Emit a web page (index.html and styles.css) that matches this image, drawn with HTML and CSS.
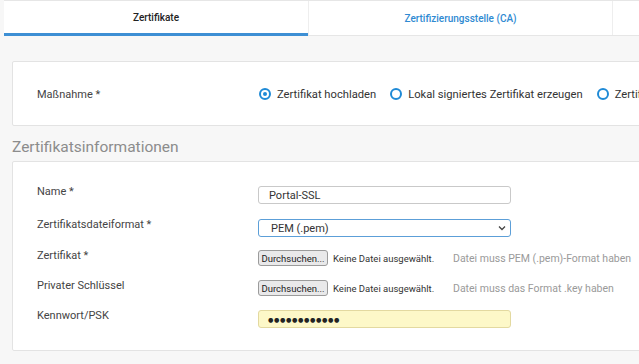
FILE: index.html
```html
<!DOCTYPE html>
<html lang="de">
<head>
<meta charset="utf-8">
<title>Zertifikate</title>
<link rel="stylesheet" href="styles.css">
</head>
<body>
<div class="page">
  <nav class="tabs">
    <div class="tab tab-active">Zertifikate</div>
    <div class="tab tab-link">Zertifizierungsstelle (CA)</div>
    <div class="tab tab-empty"></div>
  </nav>
  <main class="content">
    <section class="panel panel-action">
      <div class="row-label">Maßnahme *</div>
      <div class="radios">
        <label class="radio"><span class="radio-dot radio-checked"></span>Zertifikat hochladen</label>
        <label class="radio"><span class="radio-dot"></span>Lokal signiertes Zertifikat erzeugen</label>
        <label class="radio"><span class="radio-dot"></span>Zertifikatsignierungsanforderung (CSR) erzeugen</label>
      </div>
    </section>
    <h2 class="section-title">Zertifikatsinformationen</h2>
    <section class="panel panel-form">
      <div class="form-row">
        <div class="form-label">Name *</div>
        <div class="field field-text">Portal-SSL</div>
      </div>
      <div class="form-row">
        <div class="form-label">Zertifikatsdateiformat *</div>
        <div class="field field-select">PEM (.pem)
          <svg class="chevron" width="8" height="6" viewBox="0 0 8 6"><path d="M1 1.5 L4 4.5 L7 1.5" fill="none" stroke="#444" stroke-width="1.3"/></svg>
        </div>
      </div>
      <div class="form-row">
        <div class="form-label">Zertifikat *</div>
        <div class="file">
          <span class="file-button">Durchsuchen...</span>
          <span class="file-status">Keine Datei ausgewählt.</span>
          <span class="file-hint">Datei muss PEM (.pem)-Format haben</span>
        </div>
      </div>
      <div class="form-row">
        <div class="form-label">Privater Schlüssel</div>
        <div class="file">
          <span class="file-button">Durchsuchen...</span>
          <span class="file-status">Keine Datei ausgewählt.</span>
          <span class="file-hint">Datei muss das Format .key haben</span>
        </div>
      </div>
      <div class="form-row">
        <div class="form-label">Kennwort/PSK</div>
        <div class="field field-password"><span class="dots">●●●●●●●●●●●●</span></div>
      </div>
    </section>
  </main>
</div>
</body>
</html>
```

FILE: styles.css
```css
html, body {
  margin: 0;
  padding: 0;
  overflow: hidden;
  background: #f7f7f7;
  font-family: Roboto, "Noto Sans", sans-serif;
  color: #333;
}

.page {
  width: 760px;
}

.tabs {
  display: flex;
  margin-left: 4px;
  height: 34px;
  background: #fff;
  border-top: 1px solid #e6e6e6;
  border-bottom: 1px solid #e6e6e6;
}

.tab {
  width: 304px;
  flex: none;
  display: flex;
  align-items: center;
  justify-content: center;
  font-size: 10px;
  font-weight: 500;
  box-sizing: border-box;
}

.tab-active {
  color: #222;
  border-bottom: 3px solid #3d8fd4;
  margin-bottom: -1px;
}

.tab-link {
  color: #2f8ad2;
  border-left: 1px solid #eeeeee;
}

.tab-empty {
  border-left: 1px solid #eeeeee;
}

.content {
  padding: 25px 0 0 12px;
}

.panel {
  background: #fff;
  border: 1px solid #e3e3e3;
  border-radius: 2px;
}

.panel-action {
  display: flex;
  align-items: center;
  padding: 1px 0 0 24px;
  box-sizing: border-box;
  height: 65px;
}

.row-label {
  width: 222px;
  flex: none;
  font-size: 11px;
  color: #444;
}

.radios {
  display: flex;
  align-items: center;
  gap: 14px;
  white-space: nowrap;
}

.radio {
  display: flex;
  align-items: center;
  gap: 6px;
  font-size: 11.2px;
  color: #333;
}

.radio-dot {
  width: 12px;
  height: 12px;
  box-sizing: border-box;
  border: 2px solid #1f8ad6;
  border-radius: 50%;
  display: flex;
  align-items: center;
  justify-content: center;
}

.radio-checked::after {
  content: "";
  width: 4px;
  height: 4px;
  border-radius: 50%;
  background: #1f8ad6;
}

.section-title {
  margin: 11px 0 4px;
  font-size: 15.5px;
  line-height: 20px;
  font-weight: 400;
  color: #8c8c8c;
}

.panel-form {
  padding: 24px 0 22px 24px;
  display: flex;
  flex-direction: column;
}

.form-row {
  display: flex;
  align-items: flex-start;
}

.form-row + .form-row {
  margin-top: 14px;
}

.form-row:nth-child(2) {
  margin-top: 15px;
}

.form-row:nth-child(3) {
  margin-top: 13px;
}

.form-label {
  width: 221px;
  flex: none;
  font-size: 11px;
  line-height: 12px;
  color: #444;
}

.field {
  width: 253px;
  height: 18px;
  box-sizing: border-box;
  border: 1px solid #c9c9c9;
  border-radius: 3px;
  display: flex;
  align-items: center;
  font-size: 11px;
  color: #333;
}

.field-text {
  padding-left: 10px;
}

.field-select {
  padding-left: 12px;
  border-color: #5c9fd8;
  justify-content: space-between;
  padding-right: 4px;
}

.chevron {
  display: block;
}

.field-password {
  padding-left: 9px;
  background: #fdf8c8;
  border-color: #e3d9a0;
}

.dots {
  font-family: "DejaVu Sans", sans-serif;
  font-size: 6.2px;
  letter-spacing: 0.6px;
  color: #222;
}

.file {
  display: flex;
  align-items: center;
  height: 16px;
  white-space: nowrap;
}

.file-button {
  width: 70px;
  height: 16px;
  box-sizing: border-box;
  border: 1px solid #9b9b9b;
  border-radius: 3px;
  background: #e9e9ea;
  font-size: 9.5px;
  color: #222;
  display: flex;
  align-items: center;
  justify-content: center;
}

.file-status {
  width: 125px;
  padding-left: 5px;
  box-sizing: border-box;
  font-size: 9.5px;
  color: #333;
}

.file-hint {
  font-size: 10.5px;
  color: #9a9a9a;
}
```
